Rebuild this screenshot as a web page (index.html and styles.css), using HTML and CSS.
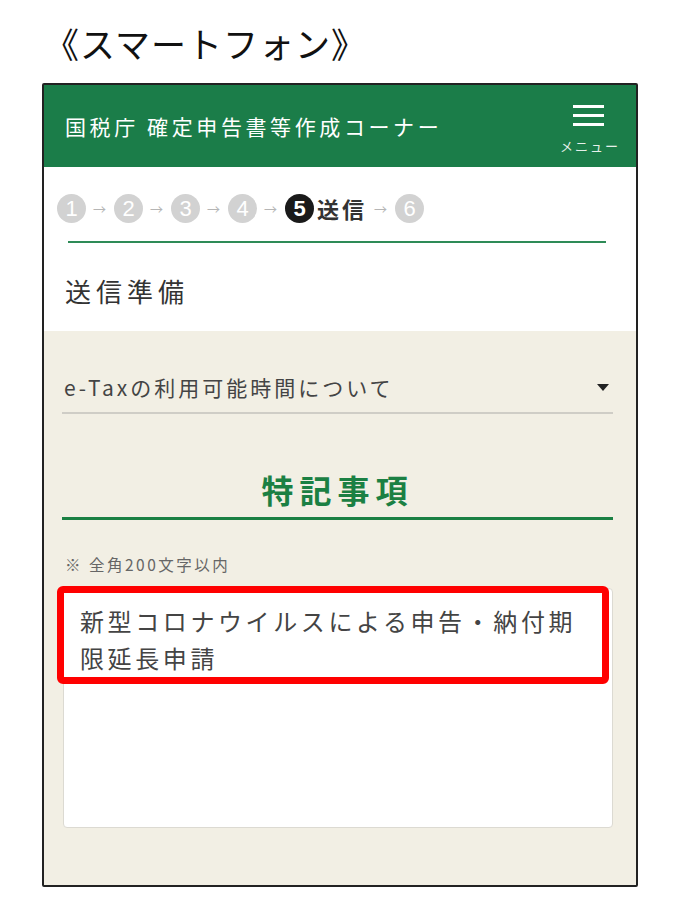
FILE: index.html
```html
<!DOCTYPE html>
<html lang="ja">
<head>
    <meta charset="utf-8">
    <link rel="stylesheet" href="styles.css">
</head>
<body>
    <h1 class="caption">《スマートフォン》</h1>
    <div class="phone">
        <header class="top-bar">
            <span class="site-title">国税庁 確定申告書等作成コーナー</span>
            <div class="menu">
                <span class="bars"><i></i><i></i><i></i></span>
                <span class="menu-label">メニュー</span>
            </div>
        </header>
        <section class="head">
            <div class="steps">
                <span class="num">1</span><span class="arrow">→</span>
                <span class="num">2</span><span class="arrow">→</span>
                <span class="num">3</span><span class="arrow">→</span>
                <span class="num">4</span><span class="arrow">→</span>
                <span class="num current">5</span><span class="step-name">送信</span><span class="arrow">→</span>
                <span class="num">6</span>
            </div>
            <div class="progress-line"></div>
            <h2 class="page-title">送信準備</h2>
        </section>
        <section class="body">
            <div class="notice">
                <span>e-Taxの利用可能時間について</span>
                <span class="caret"></span>
            </div>
            <h3 class="section-title">特記事項</h3>
            <p class="hint">※ 全角200文字以内</p>
            <div class="memo-wrap">
                <div class="memo">新型コロナウイルスによる申告・納付期限延長申請</div>
                <div class="highlight"></div>
            </div>
        </section>
    </div>
</body>
</html>
```

FILE: styles.css
```css
body {
    margin: 0;
    background-color: #fff;
    font-family: "Noto Sans CJK JP", "Noto Sans", sans-serif;
    color: #333;
}
.caption {
    margin: 0;
    padding: 19px 0 0 44px;
    font-size: 35px;
    font-weight: 400;
    line-height: 48px;
    letter-spacing: 1px;
    color: #111;
    height: 64px;
}
.phone {
    margin-left: 42px;
    width: 592px;
    border: 2px solid #222;
    border-radius: 2px;
}
.top-bar {
    background-color: #1b7d49;
    height: 82px;
    display: flex;
    align-items: center;
    justify-content: space-between;
    padding: 0 16px 0 21px;
}
.site-title {
    color: #fff;
    font-size: 21px;
    letter-spacing: 3.6px;
}
.menu {
    display: flex;
    flex-direction: column;
    align-items: center;
    margin-top: 8px;
}
.bars {
    display: flex;
    flex-direction: column;
    gap: 6px;
    margin-right: 2px;
}
.bars i {
    display: block;
    width: 31px;
    height: 3px;
    background-color: #fff;
}
.menu-label {
    color: #e6f0ea;
    font-size: 13px;
    letter-spacing: 2px;
    margin-top: 10px;
}
.head {
    background-color: #fff;
    padding: 26px 0 22px 0;
}
.steps {
    display: flex;
    align-items: center;
    height: 30px;
    padding-left: 13px;
}
.num {
    width: 29px;
    height: 29px;
    border-radius: 50%;
    background-color: #d2d2d2;
    color: #fff;
    font-family: "Liberation Sans", sans-serif;
    font-size: 22px;
    line-height: 29px;
    text-align: center;
}
.num.current {
    background-color: #1a1a1a;
    font-weight: 700;
}
.arrow {
    color: #b5b5b5;
    font-size: 13px;
    margin: 0 8px 0 7px;
}
.step-name {
    font-size: 22px;
    font-weight: 700;
    color: #333;
    margin-left: 3px;
    letter-spacing: 3px;
}
.progress-line {
    height: 2px;
    background-color: #2e8b57;
    margin: 18px 30px 0 24px;
}
.page-title {
    margin: 0;
    padding: 30px 0 0 21px;
    font-size: 26px;
    font-weight: 400;
    line-height: 36px;
    letter-spacing: 5px;
    color: #333;
}
.body {
    background-color: #f2efe4;
    padding: 41px 23px 57px 18px;
}
.notice {
    display: flex;
    align-items: center;
    justify-content: space-between;
    height: 30px;
    padding: 0 2px 10px 2px;
    border-bottom: 2px solid #cfcdc6;
    font-size: 21px;
    letter-spacing: 3px;
    color: #444;
}
.caret {
    width: 0;
    height: 0;
    border-left: 6px solid transparent;
    border-right: 6px solid transparent;
    border-top: 7px solid #222;
    margin-right: 2px;
}
.section-title {
    margin: 53px 0 0 0;
    padding-bottom: 6px;
    border-bottom: 3px solid #1b8043;
    text-align: center;
    font-size: 32px;
    font-weight: 700;
    line-height: 44px;
    letter-spacing: 6px;
    color: #1b8043;
}
.hint {
    margin: 35px 0 14px 3px;
    font-size: 15.5px;
    line-height: 19px;
    letter-spacing: 2.5px;
    color: #666;
}
.memo-wrap {
    position: relative;
}
.memo {
    height: 240px;
    box-sizing: border-box;
    margin-left: 1px;
    padding: 13px 20px 0 16px;
    background-color: #fff;
    border: 1px solid #dcdad2;
    border-radius: 4px;
    font-size: 24px;
    line-height: 37px;
    letter-spacing: 3.6px;
    color: #444;
}
.highlight {
    position: absolute;
    top: -2px;
    left: -5px;
    width: 552px;
    height: 98px;
    box-sizing: border-box;
    border: 7px solid #ff0000;
    border-radius: 6px;
}
```
